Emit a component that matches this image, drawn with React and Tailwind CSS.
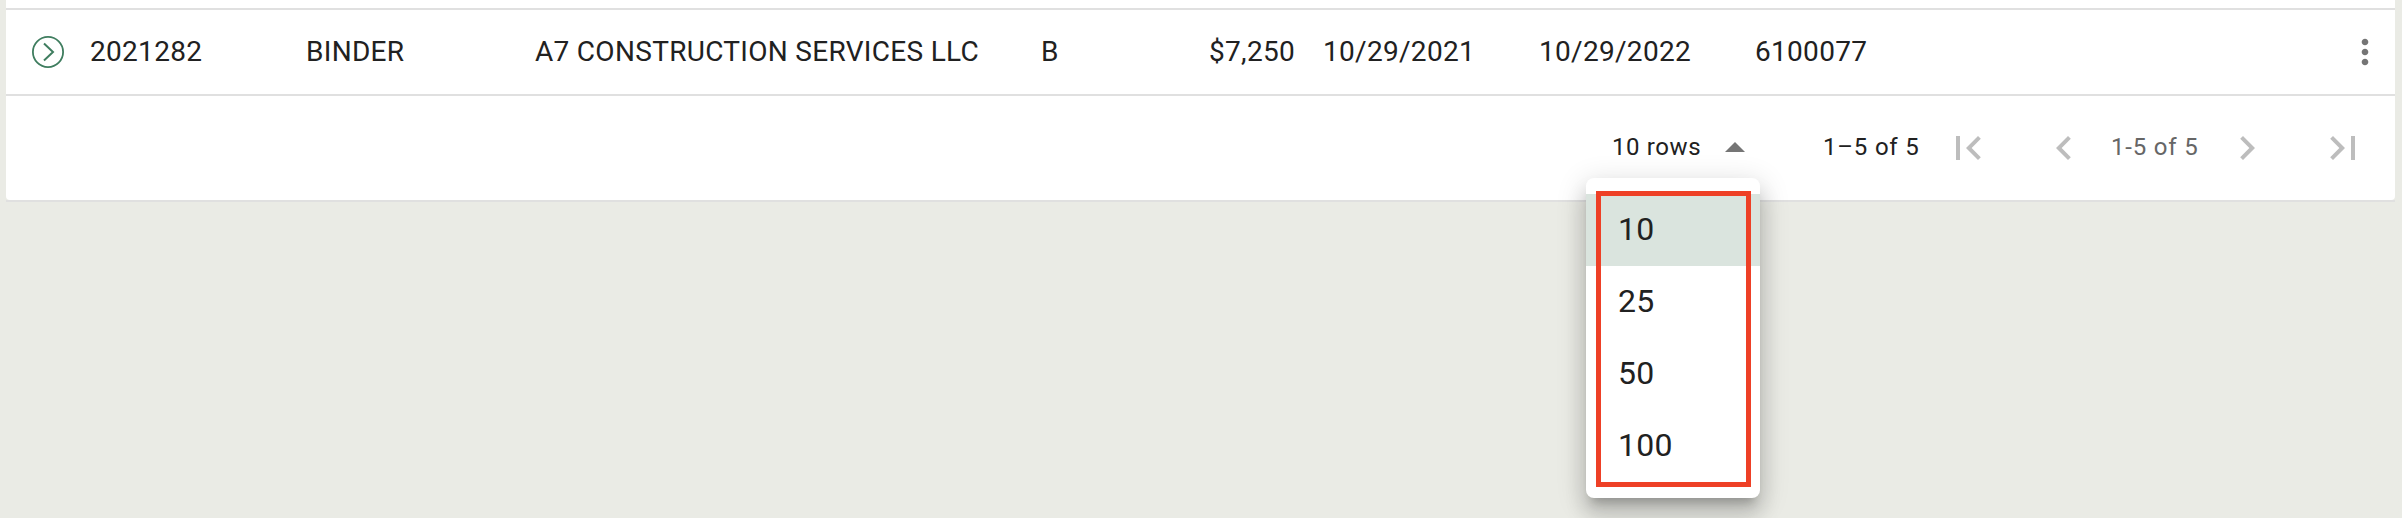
const ICONS = {
  first: "M18.41 16.59L13.82 12l4.59-4.59L17 6l-6 6 6 6zM6 6h2v12H6z",
  prev: "M15.41 7.41L14 6l-6 6 6 6 1.41-1.41L10.83 12z",
  next: "M10 6L8.59 7.41 13.17 12l-4.58 4.59L10 18l6-6z",
  last: "M5.59 7.41L10.18 12l-4.59 4.59L7 18l6-6-6-6zM16 6h2v12h-2z",
  up: "M7 14l5-5 5 5z",
  more: "M12 8c1.1 0 2-.9 2-2s-.9-2-2-2-2 .9-2 2 .9 2 2 2zm0 2c-1.1 0-2 .9-2 2s.9 2 2 2 2-.9 2-2-.9-2-2-2zm0 6c-1.1 0-2 .9-2 2s.9 2 2 2 2-.9 2-2-.9-2-2-2z",
};

function Icon({ name, className }) {
  return (
    <svg viewBox="0 0 24 24" fill="currentColor" className={`shrink-0 ${className}`}>
      <path d={ICONS[name]} />
    </svg>
  );
}

function PageButton({ name, label, className }) {
  return (
    <button aria-label={label} className={`shrink-0 text-[#bdbdbd] ${className}`}>
      <Icon name={name} className="size-12" />
    </button>
  );
}

function PolicyRow() {
  return (
    <div className="flex h-[86px] items-center border-b-2 border-[#e0e0e0] pl-[26px] text-[28px] tracking-[0.3px] whitespace-nowrap">
      <svg viewBox="0 0 32 32" fill="none" stroke="#3f7d5f" className="size-8 shrink-0">
        <circle cx="16" cy="16" r="15.1" strokeWidth="1.8" />
        <path d="M12 7.5l9 8.5-9 8.5" strokeWidth="2" />
      </svg>
      <div className="ml-[26px] w-[216px] shrink-0">2021282</div>
      <div className="w-[229px] shrink-0">BINDER</div>
      <div className="w-[506px] shrink-0">A7 CONSTRUCTION SERVICES LLC</div>
      <div className="w-[99px] shrink-0">B</div>
      <div className="w-[155px] shrink-0 text-right">$7,250</div>
      <div className="ml-[28px] w-[216px] shrink-0">10/29/2021</div>
      <div className="w-[216px] shrink-0">10/29/2022</div>
      <div className="w-[216px] shrink-0">6100077</div>
      <button aria-label="More" className="mr-[10px] ml-auto text-[#757575]">
        <Icon name="more" className="size-10" />
      </button>
    </div>
  );
}

function RowsMenu() {
  return (
    <div className="absolute top-[54px] left-[-26px] w-[174px] rounded-lg bg-white py-4 shadow-[0_10px_10px_-6px_rgba(0,0,0,0.2),0_16px_20px_2px_rgba(0,0,0,0.14),0_6px_28px_4px_rgba(0,0,0,0.12)]">
      {["10", "25", "50", "100"].map((n, i) => (
        <div
          key={n}
          className={`flex h-[72px] items-center pb-[2px] pl-8 text-[32px] tracking-[0.3px] ${i === 0 ? "bg-[#dae4de]" : ""}`}
        >
          {n}
        </div>
      ))}
      <div className="absolute top-[13px] left-[10px] h-[296px] w-[155px] border-[5px] border-[#ee4026]" />
    </div>
  );
}

export default function App() {
  return (
    <div className="h-[518px] w-[2402px] overflow-hidden bg-[#eaebe5] pr-[7px] pl-[6px] font-['Roboto',sans-serif] text-[#212121]">
      <div className="border-b-2 border-[#e0e0e0]">
        <div className="rounded-b-[4px] bg-white">
          <div className="h-[10px] border-b-2 border-[#e0e0e0]" />
          <PolicyRow />
          <div className="flex h-[104px] items-center pl-[1606px] text-[24px] tracking-[0.8px] whitespace-nowrap">
            <div className="relative flex h-12 w-[147px] shrink-0 items-center justify-between">
              <span className="pb-[2px] tracking-[0.6px]">10 rows</span>
              <Icon name="up" className="size-12 text-[#757575]" />
              <RowsMenu />
            </div>
            <div className="ml-[64px] w-[121px] shrink-0 pb-[2px]">1–5 of 5</div>
            <PageButton name="first" label="First page" className="" />
            <PageButton name="prev" label="Previous page" className="ml-12" />
            <div className="ml-[23px] w-[112px] shrink-0 pb-[2px] text-[#666666]">1-5 of 5</div>
            <PageButton name="next" label="Next page" className="" />
            <PageButton name="last" label="Last page" className="ml-12" />
          </div>
        </div>
      </div>
    </div>
  );
}
